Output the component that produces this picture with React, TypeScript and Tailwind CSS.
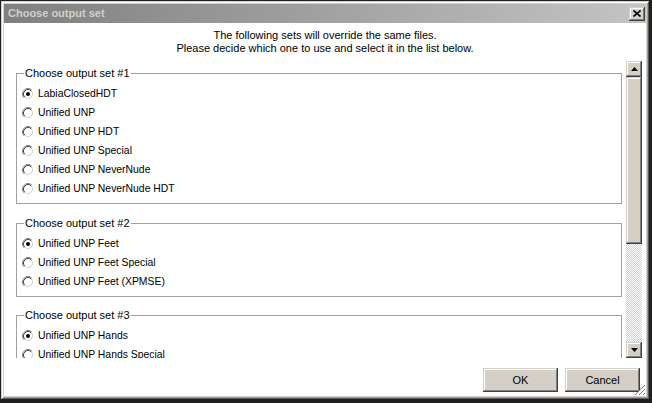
import React from "react";

const groups = [
  {
    title: "Choose output set #1",
    items: [
      "LabiaClosedHDT",
      "Unified UNP",
      "Unified UNP HDT",
      "Unified UNP Special",
      "Unified UNP NeverNude",
      "Unified UNP NeverNude HDT",
    ],
    gap: "mb-[19px]",
  },
  {
    title: "Choose output set #2",
    items: ["Unified UNP Feet", "Unified UNP Feet Special", "Unified UNP Feet (XPMSE)"],
    gap: "mb-[18px]",
  },
  {
    title: "Choose output set #3",
    items: ["Unified UNP Hands", "Unified UNP Hands Special"],
    gap: "",
  },
];

function Radio({ checked }: { checked: boolean }) {
  return (
    <svg width="12" height="12" viewBox="0 0 12 12" className="shrink-0">
      <circle cx="6" cy="6" r="5" fill="#fff" />
      <path d="M2.11 9.89 A5.5 5.5 0 0 1 9.89 2.11" fill="none" stroke="#808080" strokeWidth="1" />
      <path d="M2.82 9.18 A4.5 4.5 0 0 1 9.18 2.82" fill="none" stroke="#404040" strokeWidth="1" />
      <path d="M9.18 2.82 A4.5 4.5 0 0 1 2.82 9.18" fill="none" stroke="#d4d0c8" strokeWidth="1" />
      {checked && <circle cx="6" cy="6" r="2" fill="#000" />}
    </svg>
  );
}

function Group({ title, items, gap }: { title: string; items: string[]; gap: string }) {
  return (
    <div className={`relative border border-[#a0a0a0] pt-[10px] pb-[5px] ${gap}`}>
      <div className="absolute -top-[7px] left-[7px] bg-white px-[1px] leading-[13px]">{title}</div>
      {items.map((it, i) => (
        <div key={it} className="h-[19px] flex items-center pl-[5px] gap-[4px]">
          <Radio checked={i === 0} />
          <span className="leading-[13px] text-[10.4px]">{it}</span>
        </div>
      ))}
    </div>
  );
}

const raised =
  "bg-[#d4d0c8] shadow-[inset_-1px_-1px_0_#404040,inset_1px_1px_0_#d4d0c8,inset_-2px_-2px_0_#808080,inset_2px_2px_0_#fff]";

function Arrow({ up }: { up: boolean }) {
  return (
    <svg width="7" height="4" viewBox="0 0 7 4">
      <path d={up ? "M3.5 0 L7 4 L0 4 Z" : "M0 0 L7 0 L3.5 4 Z"} fill="#000" />
    </svg>
  );
}

export default function App() {
  return (
    <div className="w-[652px] h-[403px] bg-[#1f1f1f] overflow-hidden font-['Liberation_Sans',Arial,sans-serif] text-[11px] text-black">
      <div className="ml-[1px] mt-[1px] w-[648px] h-[398px] bg-[#d4d0c8] p-[3px] flex flex-col shadow-[inset_1px_1px_0_#d4d0c8,inset_-1px_-1px_0_#5a5a5a,inset_2px_2px_0_#fff,inset_-2px_-2px_0_#a0a0a0]">
        {/* title bar */}
        <div className="h-[19px] shrink-0 flex items-center justify-between pl-[4px] pr-[1px] bg-linear-to-r from-[#808080] to-[#c4c4c4]">
          <span className="font-bold text-[#d4d0c8] text-[11px] leading-[13px]">Choose output set</span>
          <div className={`w-[16px] h-[14px] flex items-center justify-center ${raised}`}>
            <svg width="8" height="7" viewBox="0 0 8 7">
              <path d="M0.5 0.5 L7.5 6.5 M7.5 0.5 L0.5 6.5" stroke="#000" strokeWidth="1.6" />
            </svg>
          </div>
        </div>

        {/* body */}
        <div className="flex-1 bg-white flex flex-col">
          <div className="h-[38px] shrink-0 pt-[6px] text-center leading-[13px]">
            <div>The following sets will override the same files.</div>
            <div>Please decide which one to use and select it in the list below.</div>
          </div>

          <div className="h-[297px] shrink-0 flex pr-[4px]">
            <div className="flex-1 overflow-hidden pl-[12px] pr-[4px] pt-[12px]">
              {groups.map((g) => (
                <Group key={g.title} title={g.title} items={g.items} gap={g.gap} />
              ))}
            </div>
            <div className="w-[16px] flex flex-col">
              <div className={`h-[16px] shrink-0 flex items-center justify-center ${raised}`}>
                <Arrow up />
              </div>
              <div className={`h-[167px] shrink-0 ${raised}`} />
              <div className="flex-1 bg-[repeating-conic-gradient(#d4d0c8_0_25%,#fff_0_50%)] bg-[length:2px_2px]" />
              <div className={`h-[16px] shrink-0 flex items-center justify-center ${raised}`}>
                <Arrow up={false} />
              </div>
            </div>
          </div>

          <div className="flex-1 flex items-start justify-end pt-[10px] pr-[6px] gap-[7px] relative">
            <div className={`w-[75px] h-[24px] flex items-center justify-center ${raised}`}>OK</div>
            <div className={`w-[75px] h-[24px] flex items-center justify-center ${raised}`}>Cancel</div>
            <svg width="12" height="12" viewBox="0 0 12 12" className="absolute right-0 bottom-0">
              <path d="M11 1 L1 11 M11 5 L5 11 M11 9 L9 11" stroke="#808080" strokeWidth="1" />
              <path d="M11 2 L2 11 M11 6 L6 11 M11 10 L10 11" stroke="#fff" strokeWidth="1" />
            </svg>
          </div>
        </div>
      </div>
    </div>
  );
}
